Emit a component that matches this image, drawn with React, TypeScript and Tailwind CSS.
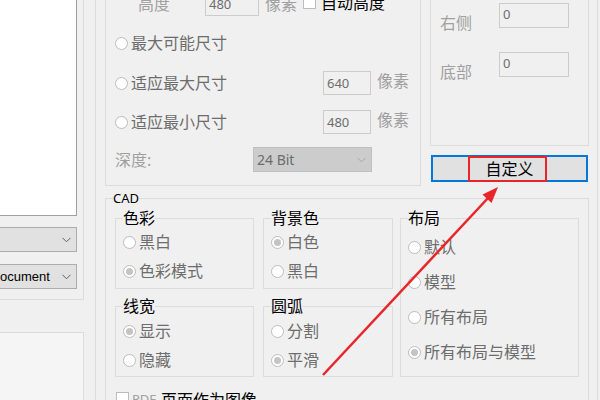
import React from 'react';

const FONT = "font-['Noto_Sans','Noto_Sans_CJK_SC',sans-serif]";

const Chevron = ({ color = '#606060' }: { color?: string }) => (
  <svg width="9" height="6" viewBox="0 0 9 6" className="shrink-0">
    <path d="M0.5 0.8 L4.5 4.8 L8.5 0.8" fill="none" stroke={color} strokeWidth="1" />
  </svg>
);

const Radio = ({ checked = false }: { checked?: boolean }) => (
  <svg width="13" height="13" viewBox="0 0 13 13" className="shrink-0">
    <circle cx="6.5" cy="6.5" r="6" fill="#ffffff" stroke="#bcbcbc" strokeWidth="1" />
    {checked && <circle cx="6.5" cy="6.5" r="3.5" fill="#c4c4c4" />}
  </svg>
);

const Check = () => (
  <span className="block w-[13px] h-[13px] shrink-0 bg-white border border-[#bcbcbc]" />
);

const RadioRow = ({ label, checked }: { label: string; checked?: boolean }) => (
  <div className="flex items-center h-5 gap-[3px]">
    <Radio checked={checked} />
    <span className="text-[16px] leading-none text-[#6d6d6d]">{label}</span>
  </div>
);

const Field = ({ value, w }: { value: string; w: string }) => (
  <div className={`${w} h-6 shrink-0 border border-[#cccccc] bg-[#f0f0f0] flex items-center pl-[3px] text-[13px] leading-none text-[#6d6d6d]`}>
    {value}
  </div>
);

const Group = ({ title, className, children }: { title: string; className: string; children: React.ReactNode }) => (
  <div className={`relative border border-[#dcdcdc] ${className}`}>
    <span className="absolute left-[7px] -top-[9px] text-[16px] leading-4 text-black bg-[#f0f0f0]">{title}</span>
    {children}
  </div>
);

export default function App() {
  return (
    <div className={`relative w-[600px] h-[400px] overflow-hidden bg-[#f0f0f0] flex ${FONT}`}>
      {/* left pane */}
      <div className="w-[84px] shrink-0 flex flex-col">
        <div className="h-[300px] border-r border-b border-[#dcdcdc] pr-[6px] flex flex-col">
          <div className="h-[216px] bg-white border-r border-b border-[#a0a0a0]" />
          <div className="mt-[11px] h-[25px] bg-[#e1e1e1] border border-l-0 border-[#adadad] flex items-center justify-end pr-[5px]">
            <Chevron />
          </div>
          <div className="mt-[12px] h-[25px] bg-[#e1e1e1] border border-l-0 border-[#adadad] flex items-center justify-between pr-[5px]">
            <span className="font-['Liberation_Sans',sans-serif] text-[13px] leading-none text-black">ocument</span>
            <Chevron />
          </div>
        </div>
        <div className="mt-[32px] flex-1 border-t border-r border-[#dcdcdc] bg-[#f5f5f5]" />
      </div>

      {/* options panel */}
      <div className="ml-[11px] w-[503px] shrink-0 border-l border-r border-[#dcdcdc] pl-[9px] pr-[8px] flex flex-col">
        <div className="-mt-[20px] flex items-start gap-[9px]">
          {/* size group */}
          <div className="w-[316px] h-[206px] border border-[#dcdcdc] pl-[9px] pt-[11px] flex flex-col">
            <div className="flex items-center h-6">
              <span className="w-[90px] pl-[23px] text-[16px] leading-none text-[#a0a0a0]">高度</span>
              <Field value="480" w="w-[54px]" />
              <span className="ml-[6px] text-[16px] leading-none text-[#a0a0a0]">像素</span>
              <span className="ml-[6px] -mt-[3px]"><Check /></span>
              <span className="ml-[5px] -mt-[2px] text-[16px] leading-none text-black">自动高度</span>
            </div>
            <div className="mt-[15px] flex items-center h-6">
              <RadioRow label="最大可能尺寸" />
            </div>
            <div className="mt-[16px] flex items-center h-6">
              <div className="w-[208px]"><RadioRow label="适应最大尺寸" /></div>
              <Field value="640" w="w-[48px]" />
              <span className="ml-[6px] -mt-[5px] text-[16px] leading-none text-[#a0a0a0]">像素</span>
            </div>
            <div className="mt-[15px] flex items-center h-6">
              <div className="w-[208px]"><RadioRow label="适应最小尺寸" /></div>
              <Field value="480" w="w-[48px]" />
              <span className="ml-[6px] -mt-[5px] text-[16px] leading-none text-[#a0a0a0]">像素</span>
            </div>
            <div className="mt-[13px] flex items-center h-[25px]">
              <span className="w-[138px] text-[16px] leading-none text-[#a0a0a0]">深度:</span>
              <div className="w-[119px] h-[25px] bg-[#cccccc] border border-[#bfbfbf] flex items-center justify-between pl-[3px] pr-[5px]">
                <span className="text-[14px] leading-none text-[#6d6d6d]">24 Bit</span>
                <Chevron color="#a8a8a8" />
              </div>
            </div>
          </div>

          {/* margin group + button */}
          <div className="w-[159px] flex flex-col">
            <div className="h-[166px] border border-[#dcdcdc] pl-[9px] pt-[22px] flex flex-col">
              <div className="flex items-center h-[25px]">
                <span className="w-[59px] mt-[14px] text-[16px] leading-none text-[#a0a0a0]">右侧</span>
                <Field value="0" w="w-[70px] h-[25px] items-start pt-[4px]" />
              </div>
              <div className="mt-[24px] flex items-center h-[25px]">
                <span className="w-[59px] mt-[14px] text-[16px] leading-none text-[#a0a0a0]">底部</span>
                <Field value="0" w="w-[70px] h-[25px] items-start pt-[4px]" />
              </div>
            </div>
            <div className="relative mt-[9px] mx-[1px] h-[27px] bg-[#e1e1e1] border-2 border-[#0078d7] flex items-center justify-center">
              <span className="text-[16px] leading-none text-black">自定义</span>
              <span className="absolute left-[35px] -top-[1px] w-[79px] h-[26px] border-2 border-[#e8262a]" />
            </div>
          </div>
        </div>

        {/* CAD group */}
        <div className="relative mt-[12px] flex-1 border border-[#dcdcdc] pl-[9px] pr-[9px] pt-[19px]">
          <span className="absolute left-[7px] -top-[7px] text-[13px] leading-[13px] text-black bg-[#f0f0f0]">CAD</span>
          <div className="flex items-start">
            <div className="w-[139px] flex flex-col gap-[17px]">
              <Group title="色彩" className="h-[71px] pl-[7px] pt-[13px] flex flex-col gap-[9px]">
                <RadioRow label="黑白" />
                <RadioRow label="色彩模式" checked />
              </Group>
              <Group title="线宽" className="h-[71px] pl-[7px] pt-[14px] flex flex-col gap-[9px]">
                <RadioRow label="显示" checked />
                <RadioRow label="隐藏" />
              </Group>
            </div>
            <div className="ml-[9px] w-[130px] flex flex-col gap-[17px]">
              <Group title="背景色" className="h-[71px] pl-[7px] pt-[13px] flex flex-col gap-[9px]">
                <RadioRow label="白色" checked />
                <RadioRow label="黑白" />
              </Group>
              <Group title="圆弧" className="h-[71px] pl-[7px] pt-[14px] flex flex-col gap-[9px]">
                <RadioRow label="分割" />
                <RadioRow label="平滑" checked />
              </Group>
            </div>
            <Group title="布局" className="ml-[7px] w-[179px] h-[159px] pl-[7px] pt-[18px] flex flex-col gap-[15px]">
              <RadioRow label="默认" />
              <RadioRow label="模型" />
              <RadioRow label="所有布局" />
              <RadioRow label="所有布局与模型" checked />
            </Group>
          </div>
          <div className="mt-[15px] flex items-start gap-[3px]">
            <span className="ml-[1px]"><Check /></span>
            <span className="mt-[1px] text-[13px] leading-none text-[#a0a0a0]">PDF</span>
            <span className="ml-[2px] text-[16px] leading-none text-black">页面作为图像</span>
          </div>
        </div>
      </div>

      {/* annotation arrow */}
      <svg className="absolute inset-0 pointer-events-none" width="600" height="400" viewBox="0 0 600 400">
        <line x1="323" y1="375" x2="489" y2="197" stroke="#e8262a" strokeWidth="2.5" />
        <polygon points="498,187 491.5,203 482.5,194.5" fill="#e8262a" />
      </svg>
    </div>
  );
}
